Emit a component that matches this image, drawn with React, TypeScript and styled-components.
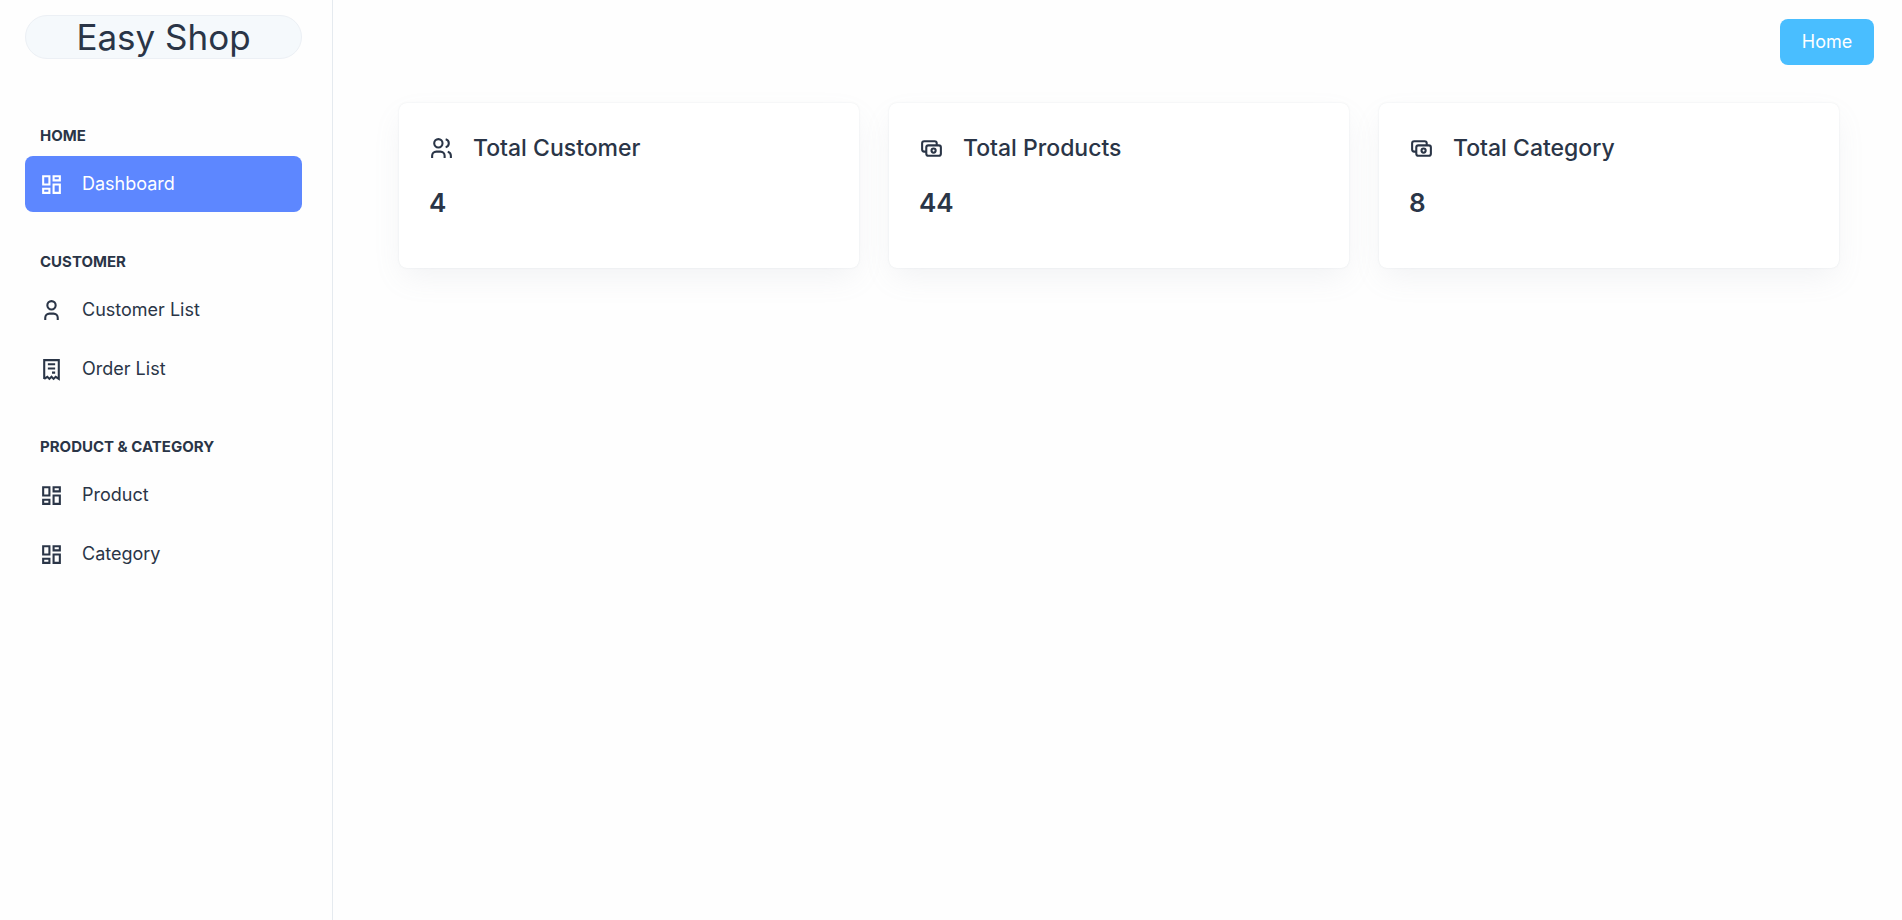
import React from "react";
import styled, { createGlobalStyle } from "styled-components";

const GlobalStyle = createGlobalStyle`
  *, *::before, *::after { box-sizing: border-box; }
  body {
    margin: 0;
    background: #fefefe;
    color: #2a3547;
    font-family: Inter, "Liberation Sans", sans-serif;
  }
`;

const Layout = styled.div`
  display: flex;
  min-height: 100vh;
`;

const Sidebar = styled.aside`
  flex: 0 0 333px;
  padding: 15px 30px 24px 25px;
  border-right: 1px solid #e5eaef;
`;

const Brand = styled.a`
  display: flex;
  align-items: center;
  justify-content: center;
  height: 44px;
  margin-bottom: 30px;
  border: 1px solid #ecf0f5;
  border-radius: 22px;
  background: #f5f9fc;
  color: inherit;
  font-size: 35px;
  line-height: 44px;
  text-decoration: none;
  white-space: nowrap;
`;

const SectionTitle = styled.h2`
  margin: 0;
  padding: 35px 15px 9px;
  font-size: 15px;
  font-weight: 700;
  line-height: 23px;
  text-transform: uppercase;
`;

const NavList = styled.ul`
  display: flex;
  flex-direction: column;
  gap: 3px;
  margin: 0 0 3px;
  padding: 0;
  list-style: none;
`;

const NavLink = styled.a<{ $active?: boolean }>`
  display: flex;
  align-items: center;
  gap: 18px;
  height: 56px;
  padding: 0 14px;
  border-radius: 8px;
  background: ${(p) => (p.$active ? "#5d87ff" : "transparent")};
  color: ${(p) => (p.$active ? "#fff" : "inherit")};
  font-size: 18px;
  line-height: 26px;
  text-decoration: none;
`;

const Main = styled.main`
  flex: 1;
  min-width: 0;
`;

const TopBar = styled.header`
  display: flex;
  justify-content: flex-end;
  padding: 19px 28px 38px;
`;

const HomeButton = styled.button`
  width: 94px;
  height: 46px;
  padding: 0;
  border: 0;
  border-radius: 8px;
  background: #49beff;
  color: #fff;
  font-family: inherit;
  font-size: 18px;
  line-height: 26px;
  cursor: pointer;
`;

const Cards = styled.section`
  display: grid;
  grid-template-columns: repeat(3, minmax(0, 1fr));
  gap: 30px;
  padding: 0 63px 0 66px;
`;

const Card = styled.article`
  min-height: 165px;
  padding: 30px;
  border-radius: 8px;
  background: #fff;
  box-shadow: 0 0 2px rgba(145, 158, 171, 0.2), 0 12px 30px -4px rgba(145, 158, 171, 0.12);
`;

const CardHeading = styled.div`
  display: flex;
  align-items: center;
  gap: 19px;
  height: 30px;
`;

const CardTitle = styled.h3`
  margin: 0;
  font-size: 23px;
  font-weight: 500;
  line-height: 30px;
`;

const CardValue = styled.p`
  margin: 22px 0 0;
  font-size: 26px;
  font-weight: 600;
  line-height: 36px;
`;

const Glyph = styled.svg`
  flex: none;
  width: 25px;
  height: 25px;
  fill: none;
  stroke: currentColor;
  stroke-width: 2;
`;

type IconName = "dashboard" | "user" | "receipt" | "users" | "cash";

const shapes: Record<IconName, string> = {
  dashboard: "M4 4h6v8h-6zM4 16h6v4h-6zM14 12h6v8h-6zM14 4h6v4h-6z",
  user: "M8 7a4 4 0 1 0 8 0a4 4 0 0 0 -8 0M6 21v-2a4 4 0 0 1 4 -4h4a4 4 0 0 1 4 4v2",
  receipt:
    "M5 21v-18h14v18l-3 -2l-2 2l-2 -2l-2 2l-2 -2l-3 2M8.5 7h7M8.5 11h7M12.5 15h3",
  users:
    "M5 7a4 4 0 1 0 8 0a4 4 0 1 0 -8 0M3 21v-2a4 4 0 0 1 4 -4h4a4 4 0 0 1 4 4v2M16 3.13a4 4 0 0 1 0 7.75M21 21v-2a4 4 0 0 0 -3 -3.85",
  cash: "M9 9h10a2 2 0 0 1 2 2v6a2 2 0 0 1 -2 2h-10a2 2 0 0 1 -2 -2v-6a2 2 0 0 1 2 -2zM12 14a2 2 0 1 0 4 0a2 2 0 1 0 -4 0M17 9v-2a2 2 0 0 0 -2 -2h-10a2 2 0 0 0 -2 2v6a2 2 0 0 0 2 2h2",
};

const Icon = ({ name }: { name: IconName }) => (
  <Glyph viewBox="0 0 24 24" aria-hidden="true">
    <path d={shapes[name]} />
  </Glyph>
);

const sections: { title: string; items: { label: string; icon: IconName; active?: boolean }[] }[] = [
  { title: "Home", items: [{ label: "Dashboard", icon: "dashboard", active: true }] },
  {
    title: "Customer",
    items: [
      { label: "Customer List", icon: "user" },
      { label: "Order List", icon: "receipt" },
    ],
  },
  {
    title: "Product & Category",
    items: [
      { label: "Product", icon: "dashboard" },
      { label: "Category", icon: "dashboard" },
    ],
  },
];

const stats: { title: string; value: number; icon: IconName }[] = [
  { title: "Total Customer", value: 4, icon: "users" },
  { title: "Total Products", value: 44, icon: "cash" },
  { title: "Total Category", value: 8, icon: "cash" },
];

export default function App() {
  return (
    <>
      <GlobalStyle />
      <Layout>
        <Sidebar>
          <Brand href="#">Easy Shop</Brand>
          <nav>
            {sections.map((section) => (
              <React.Fragment key={section.title}>
                <SectionTitle>{section.title}</SectionTitle>
                <NavList>
                  {section.items.map((item) => (
                    <li key={item.label}>
                      <NavLink href="#" $active={item.active} aria-current={item.active ? "page" : undefined}>
                        <Icon name={item.icon} />
                        {item.label}
                      </NavLink>
                    </li>
                  ))}
                </NavList>
              </React.Fragment>
            ))}
          </nav>
        </Sidebar>
        <Main>
          <TopBar>
            <HomeButton type="button">Home</HomeButton>
          </TopBar>
          <Cards>
            {stats.map((stat) => (
              <Card key={stat.title}>
                <CardHeading>
                  <Icon name={stat.icon} />
                  <CardTitle>{stat.title}</CardTitle>
                </CardHeading>
                <CardValue>{stat.value}</CardValue>
              </Card>
            ))}
          </Cards>
        </Main>
      </Layout>
    </>
  );
}
